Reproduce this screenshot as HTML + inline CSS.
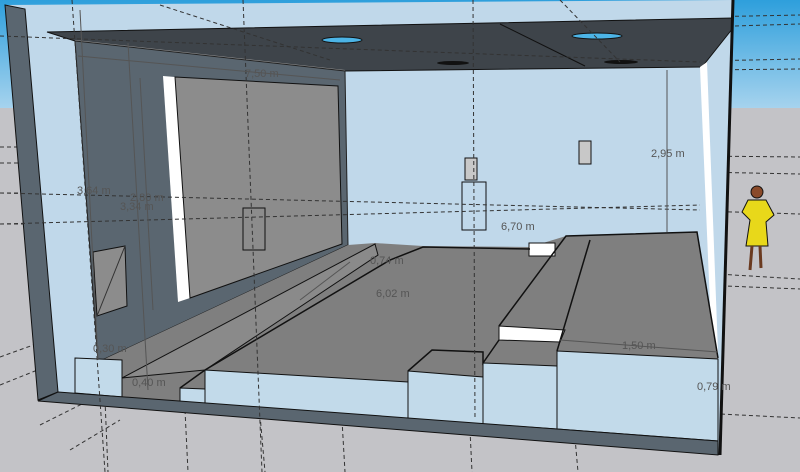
<!DOCTYPE html>
<html><head><meta charset="utf-8"><style>
html,body{margin:0;padding:0;width:800px;height:472px;overflow:hidden;background:#c3c3c7}
svg{display:block}
text{font-family:"Liberation Sans",sans-serif;font-size:11px;fill:#555}
</style></head><body>
<svg width="800" height="472" viewBox="0 0 800 472" xmlns="http://www.w3.org/2000/svg">
<defs><linearGradient id="sky" x1="0" y1="0" x2="0" y2="1"><stop offset="0" stop-color="#2e9fdc"/><stop offset="1" stop-color="#a6d3ee"/></linearGradient></defs>
<rect x="0" y="0" width="800" height="108" fill="url(#sky)"/>
<rect x="0" y="108" width="800" height="364" fill="#c3c3c7"/>
<g stroke="#333" stroke-width="1" stroke-dasharray="4,3" fill="none">
<line x1="700" y1="17" x2="800" y2="15"/><line x1="700" y1="27" x2="800" y2="24"/><line x1="700" y1="61" x2="800" y2="59"/><line x1="700" y1="70" x2="800" y2="69"/>
<line x1="700" y1="156" x2="800" y2="157"/><line x1="700" y1="172" x2="800" y2="174"/><line x1="700" y1="211" x2="800" y2="214"/><line x1="700" y1="273" x2="800" y2="279"/><line x1="700" y1="285" x2="800" y2="289"/><line x1="700" y1="413" x2="800" y2="418"/>
<line x1="0" y1="147" x2="30" y2="147"/><line x1="0" y1="163" x2="30" y2="163"/><line x1="0" y1="193" x2="30" y2="193"/><line x1="0" y1="224" x2="30" y2="224"/>
<line x1="0" y1="357" x2="75" y2="330"/><line x1="0" y1="385" x2="75" y2="355"/><line x1="40" y1="425" x2="90" y2="400"/><line x1="70" y1="450" x2="120" y2="420"/>
<line x1="105" y1="400" x2="108" y2="472"/><line x1="185" y1="410" x2="188" y2="472"/><line x1="260" y1="415" x2="265" y2="472"/><line x1="342" y1="420" x2="345" y2="472"/><line x1="470" y1="430" x2="472" y2="472"/><line x1="575" y1="438" x2="578" y2="472"/>
</g>
<!-- box -->
<polygon points="5,5 733,0 720,455 38,400" fill="#c0d8ea"/>
<!-- ceiling -->
<polygon points="47,32 733,18 733,28 702,67 345,71 75,41" fill="#3e444a" stroke="#111" stroke-width="1"/>
<line x1="75" y1="41" x2="345" y2="71" stroke="#9a9a9a" stroke-width="2"/>
<line x1="500" y1="24" x2="585" y2="66" stroke="#111"/>
<ellipse cx="342" cy="40" rx="20" ry="3" fill="#4cb4e6" stroke="#111"/>
<ellipse cx="597" cy="36" rx="25" ry="3" fill="#4cb4e6" stroke="#111"/>
<ellipse cx="453" cy="63" rx="16" ry="2" fill="#111"/>
<ellipse cx="621" cy="62" rx="17" ry="2" fill="#111"/>
<!-- left inner wall -->
<polygon points="75,41 345,71 348,245 98,362" fill="#5a6670" stroke="#222"/>
<!-- left outer wall dark -->
<polygon points="5,5 25,9 58,392 38,400" fill="#5a6670" stroke="#111"/>
<!-- gray panel -->
<polygon points="163,76 175,77 190,298 178,302" fill="#fff"/>
<polygon points="175,77 338,86 342,244 190,298" fill="#8c8c8c" stroke="#111"/>
<rect x="243" y="208" width="22" height="42" fill="none" stroke="#111"/>
<polygon points="93,252 125,246 127,306 97,316" fill="#8c8c8c" stroke="#111"/>
<line x1="97" y1="316" x2="125" y2="246" stroke="#333"/>
<!-- back wall items -->
<rect x="465" y="158" width="12" height="22" fill="#c8c8c8" stroke="#111"/>
<rect x="462" y="182" width="24" height="48" fill="none" stroke="#111"/>
<rect x="579" y="141" width="12" height="23" fill="#c8c8c8" stroke="#111"/>
<polygon points="700,67 707,62 718,352 712,352" fill="#fff"/>
<line x1="733" y1="0" x2="720" y2="455" stroke="#111" stroke-width="3"/>
<!-- floor -->
<polygon points="98,362 348,245 375,243 423,246 530,247 566,236 697,232 718,358 718,441 100,400" fill="#7f7f7f"/>
<!-- ledge -->
<polygon points="122,378 375,244 378,255 205,370" fill="#8a8a8a" stroke="#111"/>
<polygon points="529,243 555,243 555,256 529,256" fill="#fff" stroke="#111"/>
<polygon points="499,326 565,330 560,342 499,340" fill="#fff" stroke="#111"/>
<g stroke="#111" stroke-width="1.5" fill="none">
<polyline points="205,370 390,260 423,247 530,249"/>
<polyline points="499,326 566,236 697,232 718,358"/>
<polyline points="557,351 590,240"/>
<polyline points="408,371 432,350 483,352 483,363 499,340"/>
<polyline points="180,388 205,370"/>
</g>
<!-- step faces -->
<polygon points="75,358 122,360 122,397 75,393" fill="#c2daea" stroke="#111"/>
<polygon points="180,388 205,389 205,404 180,403" fill="#c2daea" stroke="#111"/>
<polygon points="205,370 408,382 408,419 205,404" fill="#c2daea" stroke="#111"/>
<polygon points="408,371 483,377 483,424 408,419" fill="#c2daea" stroke="#111"/>
<polygon points="483,363 557,366 557,429 483,424" fill="#c2daea" stroke="#111"/>
<polygon points="557,351 718,359 718,441 557,429" fill="#c2daea" stroke="#111"/>
<!-- bottom slab -->
<polygon points="58,392 718,441 718,455 38,401" fill="#5a6670" stroke="#111"/>
<!-- interior dashed lines -->
<g stroke="#333" stroke-width="1" stroke-dasharray="4,3" fill="none">
<line x1="243" y1="0" x2="262" y2="472"/>
<line x1="473" y1="0" x2="475" y2="420"/>
<line x1="72" y1="0" x2="105" y2="472"/>
<line x1="0" y1="193" x2="700" y2="210"/>
<line x1="0" y1="224" x2="700" y2="205"/>
<line x1="0" y1="36" x2="700" y2="62"/>
<line x1="160" y1="5" x2="330" y2="60"/>
<line x1="560" y1="0" x2="620" y2="62"/>
</g>
<!-- dimension lines -->
<g stroke="#555" stroke-width="1" fill="none">
<line x1="667" y1="70" x2="667" y2="232"/>
<line x1="80" y1="10" x2="98" y2="360"/>
<line x1="128" y1="43" x2="148" y2="390"/>
<line x1="140" y1="78" x2="153" y2="310"/>
<line x1="78" y1="56" x2="340" y2="80"/>
<line x1="300" y1="300" x2="350" y2="262"/>
<line x1="560" y1="340" x2="718" y2="352"/>
</g>
<!-- person -->
<g>
<circle cx="757" cy="192" r="6" fill="#8a4a2a" stroke="#111"/>
<polygon points="748,200 766,200 774,215 766,222 768,246 746,246 750,220 742,212" fill="#e8d81a" stroke="#111"/>
<line x1="752" y1="246" x2="750" y2="270" stroke="#6a3a20" stroke-width="3"/>
<line x1="760" y1="246" x2="761" y2="268" stroke="#6a3a20" stroke-width="3"/>
</g>
<!-- dimension text -->
<text x="245" y="77">7,50 m</text>
<text x="77" y="194">3,64 m</text>
<text x="130" y="201">2,80 m</text>
<text x="120" y="210">3,34 m</text>
<text x="651" y="157">2,95 m</text>
<text x="501" y="230">6,70 m</text>
<text x="370" y="264">0,74 m</text>
<text x="376" y="297">6,02 m</text>
<text x="622" y="349">1,50 m</text>
<text x="697" y="390">0,79 m</text>
<text x="132" y="386">0,40 m</text>
<text x="93" y="352">0,30 m</text>
</svg>
</body></html>
